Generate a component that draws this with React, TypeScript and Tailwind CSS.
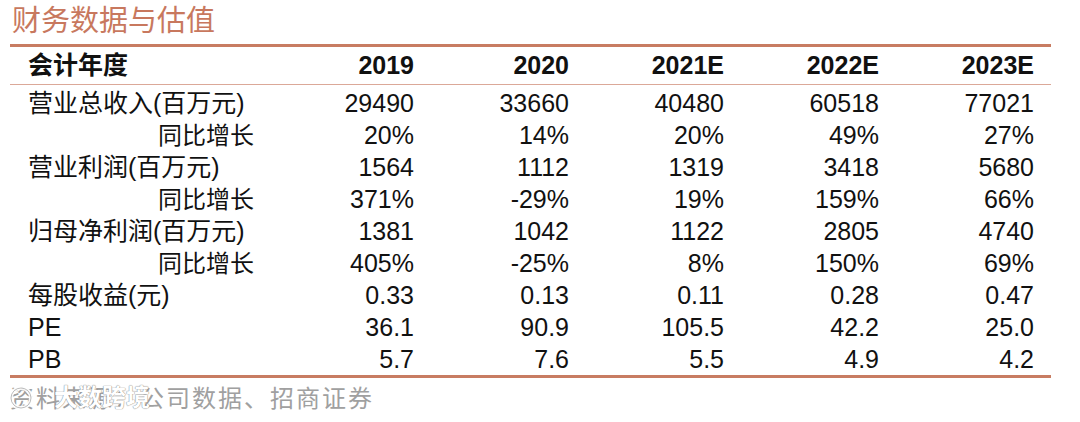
const rows: { label: string; indent?: boolean; values: string[] }[] = [
  { label: "营业总收入(百万元)", values: ["29490", "33660", "40480", "60518", "77021"] },
  { label: "同比增长", indent: true, values: ["20%", "14%", "20%", "49%", "27%"] },
  { label: "营业利润(百万元)", values: ["1564", "1112", "1319", "3418", "5680"] },
  { label: "同比增长", indent: true, values: ["371%", "-29%", "19%", "159%", "66%"] },
  { label: "归母净利润(百万元)", values: ["1381", "1042", "1122", "2805", "4740"] },
  { label: "同比增长", indent: true, values: ["405%", "-25%", "8%", "150%", "69%"] },
  { label: "每股收益(元)", values: ["0.33", "0.13", "0.11", "0.28", "0.47"] },
  { label: "PE", values: ["36.1", "90.9", "105.5", "42.2", "25.0"] },
  { label: "PB", values: ["5.7", "7.6", "5.5", "4.9", "4.2"] },
]

const years = ["2019", "2020", "2021E", "2022E", "2023E"]

const font = { fontFamily: '"Liberation Sans", "Noto Sans CJK SC", sans-serif' }

export default function App() {
  return (
    <div className="w-[1080px] h-[422px] bg-white overflow-hidden relative" style={font}>
      <div className="pl-[10px] w-[1051px]">
        {/* title */}
        <div className="h-[44px] pl-[2px] pt-[1px] text-[29px] leading-[40px] text-[#c8785e] whitespace-nowrap">
          财务数据与估值
        </div>

        <div className="h-[3px] bg-[#c87c62]" />

        {/* header */}
        <div className="grid grid-cols-[249px_repeat(5,155px)] h-[37px] items-center text-[25px] font-bold text-[#111] whitespace-nowrap">
          <div className="pl-[18px]">会计年度</div>
          {years.map((y) => (
            <div key={y} className="text-right">{y}</div>
          ))}
        </div>
        <div className="h-px bg-[#dba898]" />

        {/* body */}
        {rows.map((r, i) => (
          <div
            key={i}
            className="grid grid-cols-[249px_repeat(5,155px)] h-[32px] items-center text-[25px] text-[#111] whitespace-nowrap"
          >
            <div className={r.indent ? "pl-[148px] text-[24px]" : "pl-[18px]"}>{r.label}</div>
            {r.values.map((v, j) => (
              <div key={j} className="text-right">{v}</div>
            ))}
          </div>
        ))}

        <div className="h-[3px] mt-[2px] bg-[#c87c62]" />

        {/* source */}
        <div className="pt-[5px] text-[24px] leading-[32px] text-[#a0a0a0] tracking-[2px] whitespace-nowrap">
          资料来源：公司数据、招商证券
        </div>
      </div>

      {/* watermark */}
      <div className="absolute left-[8px] top-[384px] flex items-center gap-[6px]">
        <svg width="26" height="26" viewBox="0 0 26 26">
          <circle cx="13" cy="13" r="10" fill="none" stroke="#ffffff" strokeWidth="4" opacity="0.9" />
          <circle cx="13" cy="13" r="10" fill="none" stroke="#bdbdbd" strokeWidth="1" />
        </svg>
        <span
          className="text-[24px] font-bold text-white leading-[28px] pl-[14px] whitespace-nowrap"
          style={{ textShadow: "0 0 1px #888, 0 0 1px #888" }}
        >
          大数跨境
        </span>
      </div>
    </div>
  )
}
